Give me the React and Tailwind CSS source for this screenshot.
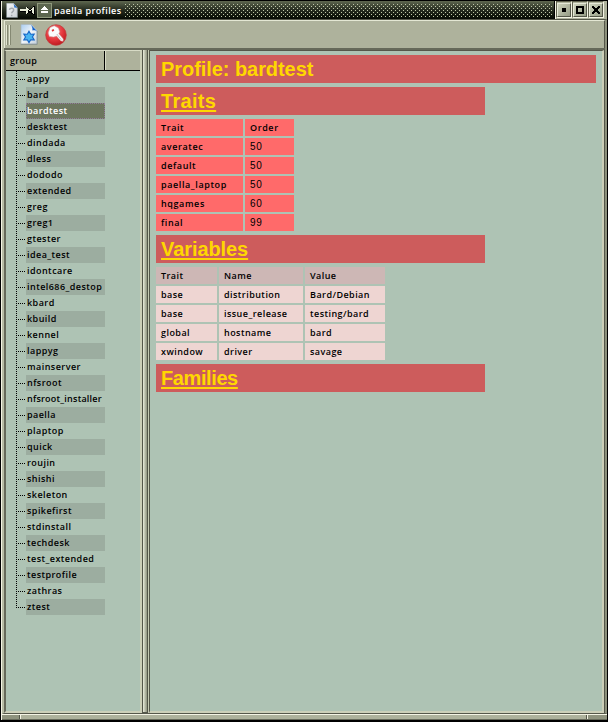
import React from "react";

const groups = [
  "appy", "bard", "bardtest", "desktest", "dindada", "dless", "dododo", "extended", "greg", "greg1",
  "gtester", "idea_test", "idontcare", "intel686_destop", "kbard", "kbuild", "kennel", "lappyg",
  "mainserver", "nfsroot", "nfsroot_installer", "paella", "plaptop", "quick", "roujin", "shishi",
  "skeleton", "spikefirst", "stdinstall", "techdesk", "test_extended", "testprofile", "zathras", "ztest",
];

const traits = [
  ["Trait", "Order"],
  ["averatec", "50"],
  ["default", "50"],
  ["paella_laptop", "50"],
  ["hqgames", "60"],
  ["final", "99"],
];

const variables = [
  ["Trait", "Name", "Value"],
  ["base", "distribution", "Bard/Debian"],
  ["base", "issue_release", "testing/bard"],
  ["global", "hostname", "bard"],
  ["xwindow", "driver", "savage"],
];

function PageIcon({ className, star }) {
  return (
    <svg className={className} viewBox="0 0 18 21" preserveAspectRatio="none">
      <defs>
        <linearGradient id="page" x1="0" y1="0" x2="1" y2="1">
          <stop offset="0" stopColor="#a9cdf0" />
          <stop offset=".5" stopColor="#f0f5fa" />
          <stop offset="1" stopColor="#c3cfdb" />
        </linearGradient>
        <linearGradient id="greyPage" x1="0" y1="0" x2="1" y2="1">
          <stop offset="0" stopColor="#f4f6f8" />
          <stop offset="1" stopColor="#ccd2d6" />
        </linearGradient>
      </defs>
      <path d="M1 .5h10.500l5.500 6v13.500H1z" fill={star ? "url(#page)" : "url(#greyPage)"} stroke="#a8b6c0" strokeWidth=".6" />
      <path d="M.8 20.300h16.400V7" fill="none" stroke="#7f8b8c" strokeWidth=".8" />
      <path d="M10.500 .3l6.900 7.200c-1.700-1.300-3.200-1.500-5-1.100.4-2-.4-4.300-1.900-6.100z" fill="#1260c8" />
      {star ? (
        <path d="M9 7.200l1.700 3 3.500-.2-1.800 2.900 1.800 2.900-3.500-.1L9 18.600l-1.700-2.900-3.500.1 1.800-2.900L3.800 10l3.500.2z" fill="#48b4f0" stroke="#1768c8" strokeWidth="1.100" />
      ) : (
        <path d="M5 9.500c1-3 7-3 6.500.5-.3 2-3 2-3 4.500m0 2v2" fill="none" stroke="#a3a8ae" strokeWidth="2.200" />
      )}
    </svg>
  );
}

function KeyIcon() {
  return (
    <svg className="ml-[7px] h-[22px] w-[22px]" viewBox="0 0 22 22">
      <defs>
        <radialGradient id="ball" cx=".4" cy=".3" r=".75">
          <stop offset="0" stopColor="#f58080" />
          <stop offset=".55" stopColor="#e63a3f" />
          <stop offset="1" stopColor="#b9161c" />
        </radialGradient>
      </defs>
      <circle cx="11" cy="11" r="10.300" fill="url(#ball)" stroke="#c03a38" strokeWidth=".7" />
      <path d="M3.200 9L5 3.600 9.200 1.800l4.200 2.200 1.300 3.800-.8 1.900 4.400 5.300-.2 2.200-2.300-.3-4.300-4.900-2.800 1-4.400-.6z" fill="#fbfbfb" stroke="#c99" strokeWidth=".5" />
      <path d="M6.500 6l2-1 .8 1.500-1.800 1.300z" fill="#d33" />
      <path d="M11.800 10l4.500 5.800" stroke="#a9a9a9" strokeWidth=".7" />
    </svg>
  );
}

function TitleButton({ children }) {
  return (
    <div className="flex h-[17px] w-4 items-center justify-center border border-b-[#f4f4e4] border-l-[#60624f] border-r-[#f4f4e4] border-t-[#60624f]">
      <div className="h-[14px] w-[14px] border border-b-[#55584a] border-l-[#e6e9d8] border-r-[#55584a] border-t-[#e6e9d8] bg-linear-to-br from-[#cdd2bc] to-[#979d87]">
        <svg viewBox="0 0 12 12" className="block h-3 w-3" shapeRendering="crispEdges">{children}</svg>
      </div>
    </div>
  );
}

function TitleBar() {
  return (
    <div className="flex h-[18px] shrink-0 bg-linear-to-b from-[#5f6850] via-[#262c20] to-[#060a04]">
      <PageIcon className="ml-1 mt-[2px] h-[15px] w-3" />
      <svg className="ml-[2px] h-[18px] w-[15px]" viewBox="0 0 15 18" shapeRendering="crispEdges">
        <path d="M0 8h6v3H0zM6 6h2v7H6zM8 8h4v4H8zM11 7h2v6h-2zM13 5h2v9h-2z" fill="#000" />
        <path d="M0 8h6v2H0zM6 6h1v7H6zM7 7h1v5H7zM8 8h1v1H8zM9 9h2v1H9zM11 8h1v1h-1zM12 7h1v5h-1zM13 6h1v7h-1z" fill="#e8ecd8" />
      </svg>
      <div className="ml-[2px] mt-[2px] h-[15px] w-[15px] border border-[#8e987c] bg-[#5c664f]">
        <svg className="block h-[13px] w-[13px]" viewBox="0 0 13 13" shapeRendering="crispEdges">
          <path d="M6 2h1v1h1v1h1v1h1v1H3V5h1V4h1V3h1zM3 7h7v2H3z" fill="#fff" />
        </svg>
      </div>
      <span className="ml-[2px] w-[70px] whitespace-nowrap leading-[19px] tracking-[0.400px] text-white">paella profiles</span>
      <svg className="ml-px h-[18px] w-[428px]" shapeRendering="crispEdges">
        <defs>
          <pattern id="dots" width="4" height="4" patternUnits="userSpaceOnUse">
            <path d="M0 3h1v1H0zM2 1h1v1H2z" fill="#c0c8a8" />
          </pattern>
        </defs>
        <path d="M0 3h428v14H0z" fill="url(#dots)" />
      </svg>
      <div className="ml-auto flex border-l border-black bg-[#aeb29c] pr-[3px]">
        <div className="w-px bg-[#f4f4e4]" />
        <TitleButton><path d="M4 4h4v4H4z" /></TitleButton>
        <TitleButton><path fillRule="evenodd" d="M2 2h8v8H2zM4 4v4h4V4z" /></TitleButton>
        <TitleButton><path d="M2 2h2v1h1v1h2V3h1V2h2v2H9v1H8v2h1v1h1v2H8V9H7V8H5v1H4v1H2V8h1V7h1V5H3V4H2z" /></TitleButton>
      </div>
    </div>
  );
}

function GroupRow({ name, index }) {
  const selected = name === "bardtest";
  const last = index === groups.length - 1;
  return (
    <div className="flex h-4">
      <div className="ml-[10px] h-4 w-[10px]">
        <svg className="block h-4 w-[10px]" viewBox="0 0 10 16">
          <path d={last ? "M.5 0V9" : "M.5 0V16"} stroke="#000" strokeDasharray="1 1" />
          <path d="M2 8.500H10" stroke="#000" strokeDasharray="1 1" />
        </svg>
      </div>
      <div
        className={
          "h-4 w-[79px] whitespace-nowrap pl-px leading-4 " +
          (name.length > 15 ? "tracking-[0.220px] " : "") +
          (selected
            ? "bg-[#6d775f] text-white outline-1 -outline-offset-1 outline-dotted outline-[#927a9a]"
            : index % 2
              ? "bg-[#9cada0]"
              : "")
        }
      >
        {name}
      </div>
    </div>
  );
}

function Heading({ children, tracking }) {
  return (
    <h2 className={"h-7 w-[329px] bg-[#cd5c5c] pl-[5px] text-[20px] font-bold leading-7 text-[#ffd700] underline decoration-2 underline-offset-2 " + tracking}>
      {children}
    </h2>
  );
}

export default function App() {
  return (
    <div className="flex h-[722px] w-[608px] flex-col overflow-hidden border-b-2 border-l border-r border-t border-black bg-[#aeb29c] font-['Open_Sans',sans-serif] text-[9px] font-semibold tracking-[0.450px] text-black">
      <div className="flex min-h-0 flex-1 flex-col border-l border-[#f4f4e4]">
        <TitleBar />
        <div className="flex min-h-0 flex-1 flex-col border-l-2 border-r-2 border-t border-b border-b-[#55574a] border-l-[#b9bda6] border-r-[#8c907c] border-t-[#55574a]">
          <div className="flex h-[28px] shrink-0 items-center border-l border-r border-t border-l-[#e4e7d4] border-r-[#55574a] border-t-[#e4e7d4]">
            <div className="ml-px flex h-5 gap-px">
              <i className="w-[2px] border-l border-r border-l-[#e4e7d4] border-r-[#858973]" />
              <i className="w-[2px] border-l border-r border-l-[#e4e7d4] border-r-[#858973]" />
            </div>
            <PageIcon star className="ml-[9px] h-[21px] w-[18px]" />
            <KeyIcon />
          </div>
          <div className="flex min-h-0 flex-1 border-r border-t-2 border-r-[#55574a] border-t-[#66695a]">
            <div className="flex w-[138px] flex-col border-b-2 border-l-2 border-r-2 border-t border-b-[#cccfb8] border-l-[#66695a] border-r-[#cccfb8] border-t-[#d8dbc6] bg-[#aec3b4]">
              <div className="flex h-5 border-b border-black bg-[#aeb29c]">
                <div className="h-[19px] w-[99px] border-r border-black pl-[4px] leading-[20px] tracking-[0.300px]">group</div>
                <div className="flex-1 border-l border-[#d8dbc6]" />
              </div>
              <div>
                {groups.map((name, index) => (
                  <GroupRow key={name} name={name} index={index} />
                ))}
              </div>
            </div>
            <div className="w-[6px] border-b border-l border-r border-[#55574a] bg-linear-to-r from-[#eceedd] to-[#8f937e]" />
            <div className="w-px bg-[#c5c9b2]" />
            <div className="min-w-0 flex-1 border-b-2 border-l border-r-2 border-t border-b-[#cccfb8] border-l-[#55574a] border-r-[#cccfb8] border-t-[#55574a] bg-[#aec3b4] pl-[6px] pt-1">
              <div className="flex flex-col gap-1 font-['Liberation_Sans',sans-serif]">
                <h1 className="h-7 w-[440px] bg-[#cd5c5c] pl-[5px] text-[20px] font-bold leading-7 tracking-[-0.060px] text-[#ffd700]">
                  Profile: bardtest
                </h1>
                <Heading tracking="tracking-[0.300px]">Traits</Heading>
                <div className="grid grid-cols-[87px_49px] gap-[2px] font-['Open_Sans',sans-serif] tracking-[0.600px]">
                  {traits.flat().map((cell, i) => (
                    <div key={i} className={"h-[17px] bg-[#ff6a6a] pl-[5px] leading-[17px]" + (i > 1 && i % 2 ? " font-['Liberation_Sans',sans-serif] text-[10px] font-medium" : "")}>{cell}</div>
                  ))}
                </div>
                <Heading tracking="tracking-[-0.080px]">Variables</Heading>
                <div className="grid grid-cols-[61px_84px_80px] gap-[2px] font-['Open_Sans',sans-serif]">
                  {variables.flat().map((cell, i) => (
                    <div key={i} className={"h-[17px] pl-[5px] leading-[17px] " + (i < 3 ? "bg-[#cdb7b5]" : "bg-[#eed5d2]")}>{cell}</div>
                  ))}
                </div>
                <Heading tracking="tracking-[-0.400px]">Families</Heading>
              </div>
            </div>
          </div>
        </div>
        <div className="flex h-[6px] shrink-0 border-b border-t border-b-[#66695a] border-t-[#f4f4e4]">
          <div className="w-[18px] border-r border-[#55574a] bg-[#8f937e]" />
          <div className="flex-1 border-l border-r border-l-[#f4f4e4] border-r-[#55574a]" />
          <div className="w-[20px] border-l border-[#f4f4e4] bg-[#8f937e]" />
        </div>
      </div>
    </div>
  );
}
